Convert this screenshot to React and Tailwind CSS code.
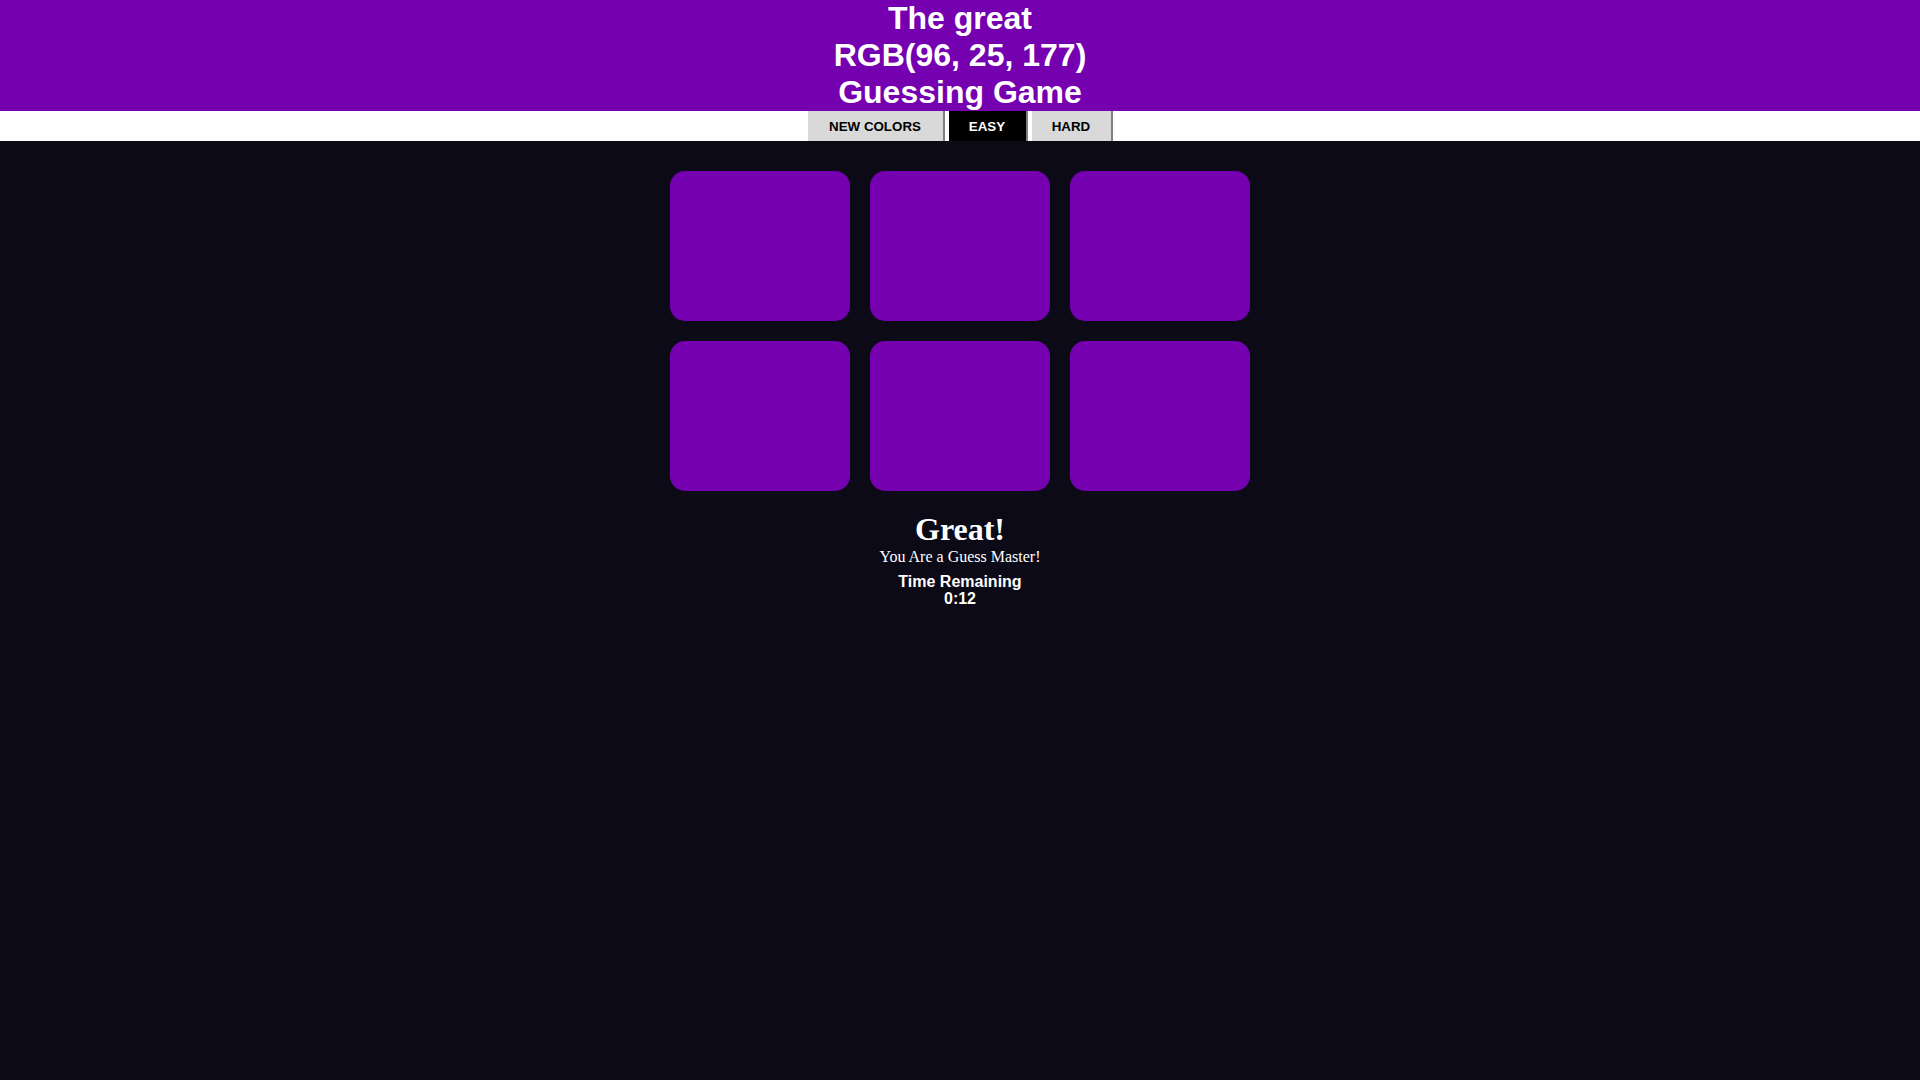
import { useState } from 'react';

// Цвет, который нужно угадать, и цвет плиток
const TARGET = 'RGB(96, 25, 177)';
const SQUARE_COLOR = '#7400b0';

export default function App() {
  const [mode, setMode] = useState('easy');
  const squares = [0, 1, 2, 3, 4, 5];

  return (
    <div className="min-h-screen bg-[#0c0a17] font-['Liberation_Sans',Arial,sans-serif]">
      {/* Заголовок */}
      <header className="bg-[#7400b0] text-white text-center">
        <h1 className="text-[32px] font-bold leading-[37px]">
          <span className="block">The great</span>
          <span className="block">{TARGET}</span>
          <span className="block">Guessing Game</span>
        </h1>
      </header>

      {/* Панель кнопок */}
      <nav className="bg-white h-[30px] flex justify-center gap-[4px]">
        <button className="w-[137px] h-full pt-[2px] bg-[#d9d9d9] border-r-2 border-[#808080] text-black text-[13.33px] font-bold uppercase">
          New Colors
        </button>
        <button
          onClick={() => setMode('easy')}
          className={`w-[79px] h-full pt-[2px] border-r-2 border-[#808080] text-[13.33px] font-bold uppercase ${
            mode === 'easy' ? 'bg-black text-white' : 'bg-[#d9d9d9] text-black'
          }`}
        >
          Easy
        </button>
        <button
          onClick={() => setMode('hard')}
          className={`w-[81px] h-full pt-[2px] border-r-2 border-[#808080] text-[13.33px] font-bold uppercase ${
            mode === 'hard' ? 'bg-black text-white' : 'bg-[#d9d9d9] text-black'
          }`}
        >
          Hard
        </button>
      </nav>

      {/* Плитки */}
      <div className="pt-[30px] flex justify-center">
        <div className="grid grid-cols-3 gap-[20px] w-[580px]">
          {squares.map((i) => (
            <div
              key={i}
              className="h-[150px] rounded-[15px]"
              style={{ backgroundColor: SQUARE_COLOR }}
            />
          ))}
        </div>
      </div>

      {/* Сообщение и таймер */}
      <div className="text-center text-white mt-[20px]">
        <h2 className="font-['Liberation_Serif','Times_New_Roman',serif] text-[32px] font-bold leading-[36px]">
          Great!
        </h2>
        <p className="font-['Liberation_Serif','Times_New_Roman',serif] text-[16px] leading-[20px]">
          You Are a Guess Master!
        </p>
        <div className="mt-[6px] text-[16px] font-bold leading-[17px]">
          <div>Time Remaining</div>
          <div>0:12</div>
        </div>
      </div>
    </div>
  );
}
